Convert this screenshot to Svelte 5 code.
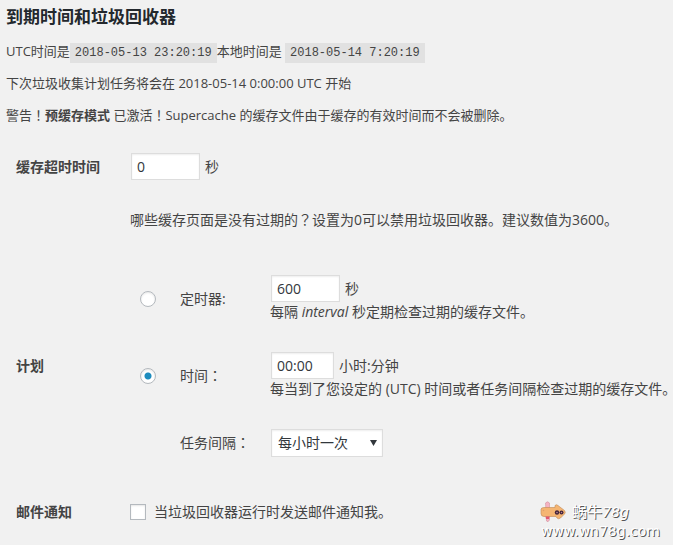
<script lang="ts">
	let cacheTimeout = $state('0');
	let interval     = $state('600');
	let clock        = $state('00:00');
	let schedule     = $state('time');
	let frequency    = $state('hourly');
	let emailMe      = $state(false);

	const frequencies = [
		{ value: 'hourly',     label: '每小时一次' },
		{ value: 'twicedaily', label: '每天两次' },
		{ value: 'daily',      label: '每天一次' },
	];
</script>

<main class="wrap">
	<h3>到期时间和垃圾回收器</h3>
	<p>UTC时间是<code>2018-05-13 23:20:19</code>本地时间是 <code>2018-05-14 7:20:19</code></p>
	<p>下次垃圾收集计划任务将会在 2018-05-14 0:00:00 UTC 开始</p>
	<p>警告<span class="mid">！</span><strong>预缓存模式</strong> 已激活<span class="mid">！</span>Supercache 的缓存文件由于缓存的有效时间而不会被删除。</p>

	<form class="form-table">
		<div class="row">
			<label class="head" for="cache-timeout">缓存超时时间</label>
			<div class="stack">
				<div class="field">
					<input id="cache-timeout" class="text" type="text" bind:value={cacheTimeout} />
					<span>秒</span>
				</div>
				<div>哪些缓存页面是没有过期的<span class="mid">？</span>设置为0可以禁用垃圾回收器。建议数值为3600。</div>
			</div>
		</div>

		<!-- Schedule: fixed timer or clock time -->
		<div class="row" role="radiogroup" aria-labelledby="schedule-head">
			<span class="head" id="schedule-head">计划</span>
			<div class="stack">
				<div class="option">
					<input id="by-interval" type="radio" name="schedule" value="interval" bind:group={schedule} />
					<label for="by-interval">定时器:</label>
					<div>
						<div class="field">
							<input class="text" type="text" aria-label="定时器" bind:value={interval} />
							<span>秒</span>
						</div>
						<div class="hint">每隔 <em>interval</em> 秒定期检查过期的缓存文件。</div>
					</div>
				</div>
				<div class="option">
					<input id="by-time" type="radio" name="schedule" value="time" bind:group={schedule} />
					<label for="by-time">时间<span class="mid">：</span></label>
					<div>
						<div class="field">
							<input class="text short" type="text" aria-label="时间" bind:value={clock} />
							<span>小时:分钟</span>
						</div>
						<div class="hint">每当到了您设定的 (UTC) 时间或者任务间隔检查过期的缓存文件<span class="stop">。</span></div>
					</div>
				</div>
				<div class="option">
					<label class="no-radio" for="frequency">任务间隔<span class="mid">：</span></label>
					<div class="select">
						<select id="frequency" bind:value={frequency}>
							{#each frequencies as f}
								<option value={f.value}>{f.label}</option>
							{/each}
						</select>
						<svg class="arrow" viewBox="0 0 7 6" aria-hidden="true"><path d="M0 0h7L3.5 6z" /></svg>
					</div>
				</div>
			</div>
		</div>

		<div class="row">
			<span class="head">邮件通知</span>
			<label class="check">
				<input type="checkbox" bind:checked={emailMe} />
				<span>当垃圾回收器运行时发送邮件通知我。</span>
			</label>
		</div>
	</form>

	<!-- Site mark over the bottom right corner -->
	<div class="mark">
		<div class="mark-top">
			<svg class="snail" viewBox="0 0 26 22" aria-hidden="true">
				<path d="M5.5 2q2-2.5 4 0v17q-1.5 3-3 1z" fill="#f6b3c1" stroke="#c98a98" stroke-width=".5" />
				<path d="M1 8.5q0-2 3-2h11V4.5q1.5-1.5 3 0l6.5 5q1.5 2 0 3.5l-4 4q-2 1.500-3.500 0L16 15.500H4q-3 0-3-3z" fill="#f5b572" stroke="#c08a58" stroke-width=".6" />
				<path d="M5.5 15.5h4l-.5 2.500H6z" fill="#e4576c" />
				<circle cx="3.5" cy="9.5" r=".8" fill="#dfa06a" />
				<circle cx="17" cy="11.5" r="2.2" fill="#43243a" />
				<circle cx="21.5" cy="11.5" r="2" fill="#43243a" />
				<circle cx="17" cy="11.5" r=".8" fill="#b9879a" />
				<circle cx="21.5" cy="11.5" r=".7" fill="#b9879a" />
			</svg>
			<span class="mark-name">蜗牛<i>78g</i></span>
		</div>
		<div class="mark-url">www.wn78g.com</div>
	</div>
</main>

<style>
	:global(body) {
		background: #f1f1f1;
	}

	.wrap {
		position: relative;
		box-sizing: border-box;
		min-height: 100vh;
		padding: 5px 0 12px 6px;
		overflow: hidden;
		color: #444;
		font: 13px/20px 'Open Sans', 'Noto Sans CJK SC', sans-serif;
	}

	h3 {
		margin: 0 0 12px;
		color: #23282d;
		font-size: 17px;
		line-height: 24px;
		font-weight: 700;
	}

	p {
		margin: 0 0 12px;
	}

	/* full-width marks centred in their cell */
	.mid {
		font-family: 'Noto Sans CJK TC', sans-serif;
		line-height: 0;
	}

	/* closing stop without its blank right half */
	.stop {
		font-family: 'Noto Sans CJK SC', sans-serif;
		font-feature-settings: 'halt';
		line-height: 0;
	}

	code {
		padding: 3px 5px;
		background: #e1e1e1;
		font: 12px/1 'Liberation Mono', monospace;
	}

	/* ── Form ── */
	.form-table {
		display: flex;
		flex-direction: column;
		gap: 45px;
		padding-top: 16px;
		padding-left: 10px;
		font-size: 14px;
	}
	.row {
		display: grid;
		grid-template-columns: 114px 1fr;
	}
	.head {
		align-self: center;
		font-weight: 700;
	}
	.row:first-child .head {
		align-self: start;
		line-height: 28px;
	}
	.stack {
		display: flex;
		flex-direction: column;
		gap: 30px;
	}
	.field {
		display: flex;
		align-items: center;
		gap: 5px;
		margin-left: 1px;
	}
	.option {
		display: grid;
		grid-template-columns: 50px 90px 1fr;
		align-items: center;
	}
	.no-radio {
		grid-column: 2;
	}
	.hint {
		white-space: nowrap;
	}

	/* ── Controls ── */
	.text,
	select {
		box-sizing: border-box;
		height: 27px;
		margin: 0;
		border: 1px solid #ddd;
		border-radius: 0;
		background: #fff;
		box-shadow: inset 0 1px 2px rgba(0, 0, 0, 0.07);
		color: #32373c;
		font: inherit;
	}
	.text {
		width: 69px;
		padding: 3px 5px;
	}
	.short {
		width: 63px;
	}
	.select {
		position: relative;
		width: 112px;
		margin-left: 1px;
	}
	select {
		display: block;
		width: 100%;
		height: 28px;
		padding: 2px 20px 2px 6px;
		appearance: none;
	}
	.arrow {
		position: absolute;
		top: 11px;
		right: 6px;
		width: 7px;
		height: 6px;
		fill: #32373c;
		pointer-events: none;
	}
	input[type='radio'],
	input[type='checkbox'] {
		box-sizing: border-box;
		width: 16px;
		height: 16px;
		margin: 0;
		border: 1px solid #b4b9be;
		background: #fff;
		box-shadow: inset 0 1px 2px rgba(0, 0, 0, 0.1);
		appearance: none;
	}
	input[type='radio'] {
		margin-left: 10px;
		border-radius: 50%;
	}
	input[type='radio']:checked {
		background: radial-gradient(circle, #1e8cbe 0 3px, #fff 4px);
	}
	input[type='checkbox']:checked {
		background: #1e8cbe;
	}
	.check {
		display: flex;
		align-items: center;
		gap: 8px;
	}

	/* ── Site mark ── */
	.mark {
		position: absolute;
		right: 13px;
		bottom: 6px;
		color: #fff;
		font-family: 'DejaVu Sans', 'Noto Sans CJK SC', sans-serif;
		text-shadow: 1px 1px 0 #555;
	}
	.mark-top {
		display: flex;
		align-items: center;
		gap: 6px;
		padding-left: 2px;
	}
	.snail {
		width: 26px;
		height: 22px;
	}
	.mark-name {
		font-size: 15px;
	}
	.mark-name i {
		font-size: 14px;
	}
	.mark-url {
		padding-left: 3px;
		font-size: 14px;
		line-height: 16px;
	}
</style>
